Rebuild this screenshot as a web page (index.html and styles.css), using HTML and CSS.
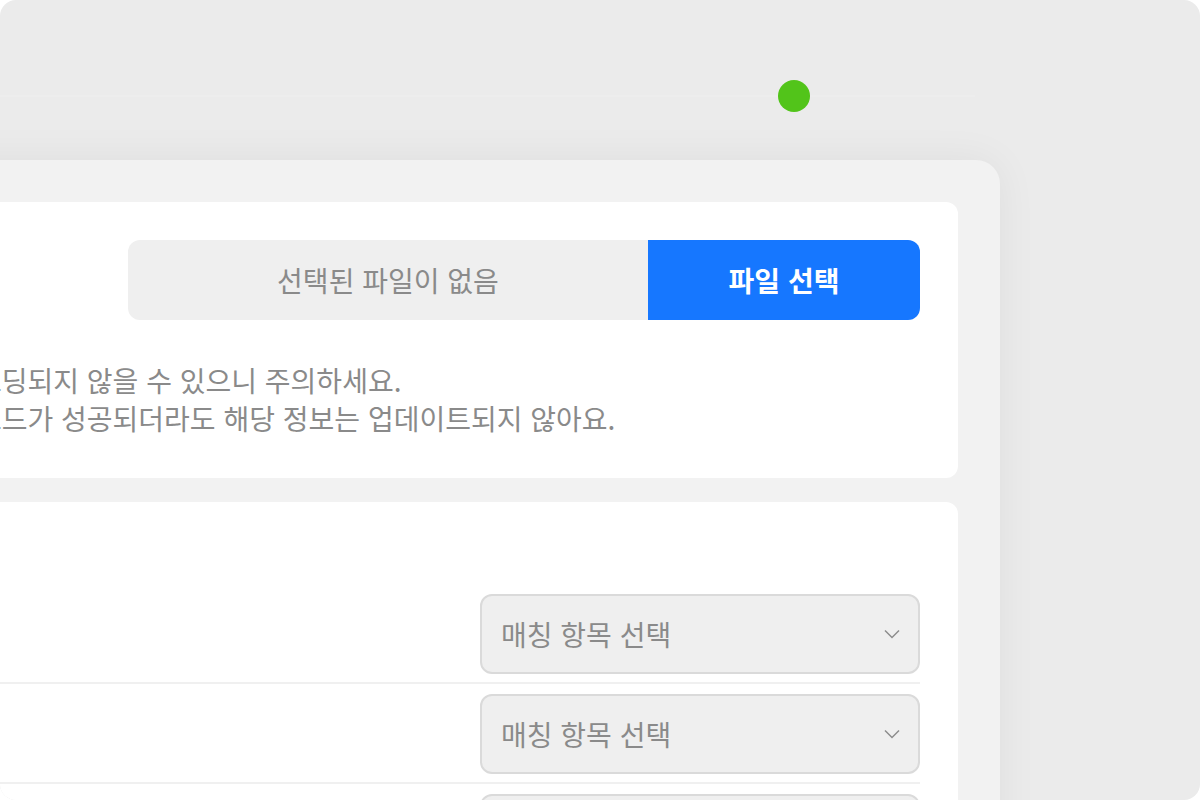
FILE: index.html
```html
<!DOCTYPE html>
<html lang="ko">
<head>
<meta charset="utf-8">
<title>파일 업로드</title>
<link rel="stylesheet" href="styles.css">
</head>
<body>
<div class="frame">
  <div class="stepper">
    <span class="track track-left"></span>
    <span class="dot"></span>
    <span class="track track-right"></span>
  </div>
  <div class="panel">
    <section class="card card-upload">
      <div class="upload-row">
        <div class="file-input">
          <span class="file-name">선택된 파일이 없음</span>
          <span class="file-btn">파일 선택</span>
        </div>
      </div>
      <ul class="notes">
        <li>· 대용량 파일은 로딩되지 않을 수 있으니 주의하세요.</li>
        <li>· 중복 파일은 업로드가 성공되더라도 해당 정보는 업데이트되지 않아요.</li>
      </ul>
    </section>
    <section class="card card-match">
      <h3 class="card-title">필드</h3>
      <div class="match-row">
        <div class="select"><span>매칭 항목 선택</span><svg class="chev" width="16" height="10" viewBox="0 0 16 10"><polyline points="1,1.5 8,8.5 15,1.5" fill="none" stroke="#8c8c8c" stroke-width="1.5"/></svg></div>
      </div>
      <div class="match-row">
        <div class="select"><span>매칭 항목 선택</span><svg class="chev" width="16" height="10" viewBox="0 0 16 10"><polyline points="1,1.5 8,8.5 15,1.5" fill="none" stroke="#8c8c8c" stroke-width="1.5"/></svg></div>
      </div>
      <div class="match-row">
        <div class="select"><span>매칭 항목 선택</span><svg class="chev" width="16" height="10" viewBox="0 0 16 10"><polyline points="1,1.5 8,8.5 15,1.5" fill="none" stroke="#8c8c8c" stroke-width="1.5"/></svg></div>
      </div>
    </section>
  </div>
</div>
</body>
</html>
```

FILE: styles.css
```css
* { box-sizing: border-box; }
html, body {
  margin: 0;
  padding: 0;
  background: #ffffff;
  font-family: "Noto Sans CJK KR", "Noto Sans", sans-serif;
}
.frame {
  width: 1200px;
  height: 800px;
  border-radius: 16px;
  background: #ebebeb;
  overflow: hidden;
  display: flex;
  flex-direction: column;
}
.stepper {
  height: 160px;
  flex: none;
  display: flex;
  align-items: center;
  padding-top: 32px;
}
.track {
  height: 2px;
  background: rgba(255, 255, 255, 0.12);
}
.track-left { width: 778px; }
.track-right { width: 165px; }
.dot {
  width: 32px;
  height: 32px;
  border-radius: 50%;
  background: #52c41a;
  flex: none;
}
.panel {
  flex: 1;
  margin-left: -290px;
  width: 1290px;
  background: #f2f2f2;
  border-top-right-radius: 24px;
  padding: 42px 42px 0 42px;
  display: flex;
  flex-direction: column;
  gap: 24px;
  box-shadow: 0 0 40px rgba(0, 0, 0, 0.06);
}
.card {
  background: #ffffff;
  border-radius: 12px;
}
.card-upload {
  padding: 38px 38px 41px;
}
.upload-row {
  display: flex;
  justify-content: flex-end;
}
.file-input {
  width: 792px;
  height: 80px;
  display: flex;
  border-radius: 12px;
  overflow: hidden;
}
.file-name {
  flex: 1;
  background: #efefef;
  color: #8a8a8a;
  font-size: 28px;
  display: flex;
  align-items: center;
  justify-content: center;
}
.file-btn {
  width: 272px;
  background: #1677ff;
  color: #ffffff;
  font-size: 28px;
  font-weight: 700;
  display: flex;
  align-items: center;
  justify-content: center;
}
.notes {
  list-style: none;
  margin: 41px 0 0;
  padding: 0;
  font-size: 28px;
  line-height: 38px;
  color: #8a8a8a;
  white-space: nowrap;
}
.card-match {
  flex: 1;
  padding: 38px 38px 0;
}
.card-title {
  margin: 0;
  height: 44px;
  font-size: 26px;
  line-height: 44px;
  font-weight: 700;
  color: #333;
}
.match-row {
  display: flex;
  justify-content: flex-end;
  padding: 10px 0 8px;
  border-bottom: 2px solid #f0f0f0;
}
.select {
  width: 440px;
  height: 80px;
  border: 2px solid #dadada;
  border-radius: 12px;
  background: #efefef;
  display: flex;
  align-items: center;
  justify-content: space-between;
  padding: 0 18px 0 19px;
  font-size: 28px;
  color: #8a8a8a;
}
.chev { flex: none; }
```
